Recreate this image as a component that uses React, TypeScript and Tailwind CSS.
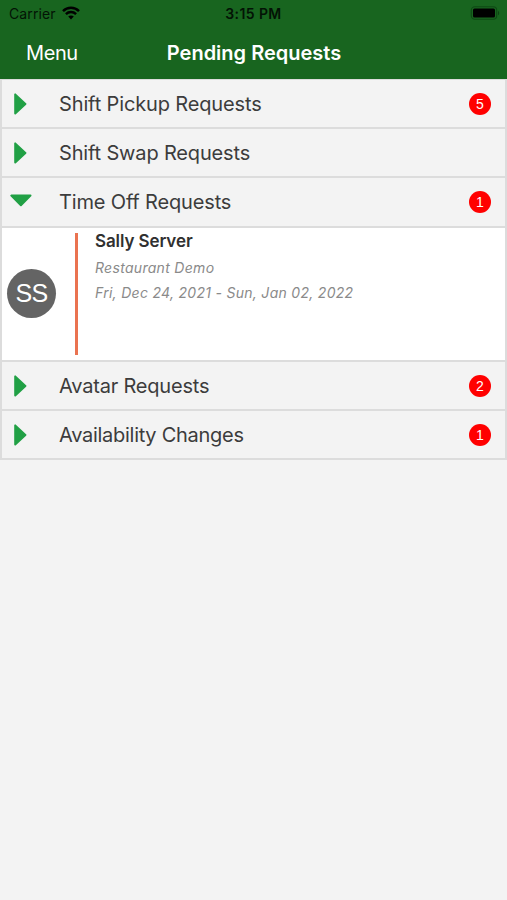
import clsx from "clsx";

type Section = {
  title: string;
  count?: number;
  open?: boolean;
  tracking: string;
};

const before: Section[] = [
  { title: "Shift Pickup Requests", count: 5, tracking: "tracking-[-0.14px]" },
  { title: "Shift Swap Requests", tracking: "tracking-[-0.16px]" },
  { title: "Time Off Requests", count: 1, open: true, tracking: "tracking-[-0.16px]" },
];

const after: Section[] = [
  { title: "Avatar Requests", count: 2, tracking: "tracking-[-0.2px]" },
  { title: "Availability Changes", count: 1, tracking: "tracking-[-0.28px]" },
];

export default function App() {
  return (
    <div className="flex h-[900px] w-[507px] flex-col overflow-hidden bg-[#f3f3f3] font-['Inter',sans-serif] text-[#3c3c3c]">
      <header className="h-[79px] shrink-0 bg-[#18651f]">
        <StatusBar />
        <nav className="grid h-[49px] grid-cols-[1fr_auto_1fr] items-center text-white">
          <button className="pl-[26px] text-left text-[20px] leading-6 tracking-[-0.4px]">Menu</button>
          <h1 className="pl-px text-[20px] leading-6 font-semibold">Pending Requests</h1>
        </nav>
      </header>

      <main className="border-x-2 border-t border-[#dcdcdc]">
        {before.map((section) => (
          <SectionRow key={section.title} section={section} />
        ))}
        <RequestCard />
        {after.map((section) => (
          <SectionRow key={section.title} section={section} />
        ))}
      </main>
    </div>
  );
}

function StatusBar() {
  return (
    <div className="grid h-[28px] grid-cols-3 items-center text-[14px] leading-5 text-[#031305]">
      <div className="flex items-center gap-[6px] pl-[9px]">
        <span className="tracking-[0.1px]">Carrier</span>
        <svg width="18" height="14" viewBox="0 0 18 14" fill="none" stroke="#000" strokeWidth="2.5" className="-translate-y-px">
          <path d="M1 5.1C5.5.7 12.5.7 17 5.1" />
          <path d="M3.9 8.1c2.9-2.7 7.3-2.7 10.2 0" />
          <path d="M6.2 10.6c1.6-1.5 4-1.5 5.6 0L9 13.4z" fill="#000" stroke="none" />
        </svg>
      </div>
      <div className="text-center font-semibold tracking-[0.4px]">3:15 PM</div>
      <div className="flex justify-end pr-[7px]">
        <svg width="30" height="14" viewBox="0 0 30 14" className="-translate-y-px">
          <rect x="1.3" y="0.8" width="25.4" height="12.4" rx="3.5" fill="none" stroke="#0e4a14" strokeWidth="1.1" />
          <rect x="3" y="2.6" width="22" height="9" rx="1.5" fill="#000" />
          <path d="M28 4.7c1.6.8 1.6 3.8 0 4.6z" fill="#0e4314" />
        </svg>
      </div>
    </div>
  );
}

function SectionRow({ section }: { section: Section }) {
  return (
    <div className="flex h-[49.2px] items-center border-b-2 border-[#dcdcdc] pt-px pr-[14px]">
      <div className="flex w-[57px] shrink-0 pl-[8px]">
        <Caret open={section.open} />
      </div>
      <h2 className={clsx("grow text-[20px] leading-6", section.tracking)}>{section.title}</h2>
      {section.count !== undefined && (
        <span className="grid size-[22px] place-items-center rounded-full bg-[#ff0000] font-['Liberation_Sans',sans-serif] text-[14px] leading-none text-white">
          {section.count}
        </span>
      )}
    </div>
  );
}

function Caret({ open }: { open?: boolean }) {
  return (
    <svg width="22" height="22" viewBox="0 0 22 22" fill="#21a045" stroke="#21a045" strokeWidth="2" strokeLinejoin="round">
      {open ? <path d="M1.3 4.6h19.2L10.9 14.2z" /> : <path d="M5.2 1.4v19.2L15.4 11z" />}
    </svg>
  );
}

function RequestCard() {
  return (
    <article className="flex h-[134.2px] border-b-2 border-[#dcdcdc] bg-white">
      <div className="flex w-[73px] shrink-0 items-center pl-[5px]">
        <div className="grid size-[49px] place-items-center rounded-full bg-[#646464] font-['Liberation_Sans',sans-serif] text-[25px] leading-none tracking-[-0.6px] text-white">
          SS
        </div>
      </div>
      <div className="mt-[5px] h-[122px] w-[3px] shrink-0 bg-[#ea7350]" />
      <div className="pt-[2px] pl-[17px]">
        <h3 className="text-[17px] leading-[22px] font-semibold tracking-[-0.1px] text-[#303030]">Sally Server</h3>
        <p className="mt-[3px] text-[14px] leading-[25px] tracking-[0.3px] text-[#8a8a8a] italic">Restaurant Demo</p>
        <p className="text-[14px] leading-[25px] tracking-[0.29px] text-[#8a8a8a] italic">
          Fri, Dec 24, 2021 - Sun, Jan 02, 2022
        </p>
      </div>
    </article>
  );
}
